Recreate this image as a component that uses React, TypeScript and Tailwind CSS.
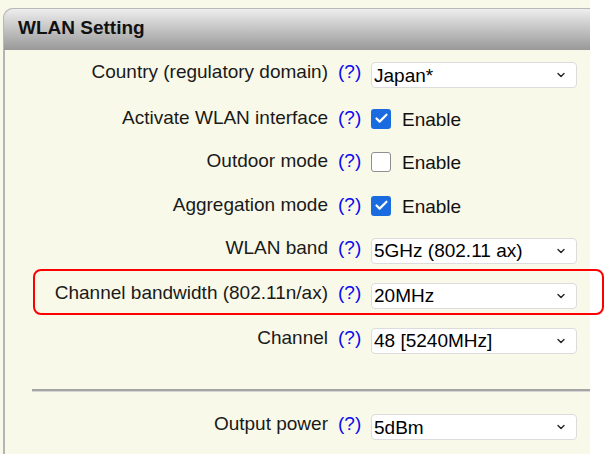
import { Check, ChevronDown } from 'lucide-react'

type Row =
  | { label: string; kind: 'select'; value: string; h: string }
  | { label: string; kind: 'check'; checked: boolean; h: string }

const rows: Row[] = [
  { label: 'Country (regulatory domain)', kind: 'select', value: 'Japan*', h: 'h-[44px]' },
  { label: 'Activate WLAN interface', kind: 'check', checked: true, h: 'h-[43px]' },
  { label: 'Outdoor mode', kind: 'check', checked: false, h: 'h-[43px]' },
  { label: 'Aggregation mode', kind: 'check', checked: true, h: 'h-[45px]' },
  { label: 'WLAN band', kind: 'select', value: '5GHz (802.11 ax)', h: 'h-[45px]' },
  { label: 'Channel bandwidth (802.11n/ax)', kind: 'select', value: '20MHz', h: 'h-[45px]' },
  { label: 'Channel', kind: 'select', value: '48 [5240MHz]', h: 'h-[45px]' },
]

function Select({ value }: { value: string }) {
  return (
    <div className="flex items-center justify-between w-[206px] h-[26px] bg-white border border-[#dcdcdc] rounded-[4px] pl-[2px] pr-[9px]">
      <span className="text-[19px] leading-none text-black">{value}</span>
      <ChevronDown className="w-[12px] h-[12px] text-[#222]" strokeWidth={2.75} />
    </div>
  )
}

function Checkbox({ checked }: { checked: boolean }) {
  if (checked) {
    return (
      <div className="w-[20px] h-[20px] rounded-[3px] bg-[#1a6be0] flex items-center justify-center">
        <Check className="w-[15px] h-[15px] text-white" strokeWidth={3.5} />
      </div>
    )
  }
  return <div className="w-[20px] h-[20px] rounded-[3px] bg-white border border-[#8f8f8f]" />
}

function SettingRow({ row }: { row: Row }) {
  const shift = row.kind === 'select' ? 'mb-[5px]' : ''
  return (
    <div className={`flex items-center ${row.h}`}>
      <div className={`w-[326px] text-right text-[19px] text-[#1a1a1a] ${shift}`}>{row.label}</div>
      <div className={`ml-[10px] w-[23px] text-[19px] text-[#0a0aee] ${shift}`}>(?)</div>
      <div className="ml-[10px] flex items-center">
        {row.kind === 'select' ? (
          <Select value={row.value} />
        ) : (
          <>
            <Checkbox checked={row.checked} />
            <span className="ml-[11px] text-[19px] text-[#111] mt-[3px]">Enable</span>
          </>
        )}
      </div>
    </div>
  )
}

export default function App() {
  return (
    <div className="relative w-[611px] h-[454px] bg-white overflow-hidden font-['Liberation_Sans',Arial,sans-serif]">
      <div className="w-[590px] h-full bg-[#f9f9e9] pt-[8px] pl-[3px]">
        <div className="h-full border-l-2 border-[#b4b4b4] rounded-tl-[10px]">
          <div className="h-[42px] -ml-[2px] rounded-tl-[10px] border-t border-l border-[#b8b8b8] bg-gradient-to-b from-[#eeeeee] to-[#999999] flex items-center pl-[14px]">
            <h2 className="text-[19px] font-bold text-[#111] mt-[-2px]">WLAN Setting</h2>
          </div>

          <div className="pt-[3px] -ml-[3px]">
            {rows.map((row) => (
              <SettingRow key={row.label} row={row} />
            ))}

            <div className="ml-[30px] mt-[26px] border-t-2 border-[#a4a4a4] border-b border-b-[#d6d6d6]" />

            <div className="mt-[13px]">
              <SettingRow row={{ label: 'Output power', kind: 'select', value: '5dBm', h: 'h-[44px]' }} />
            </div>
          </div>
        </div>
      </div>

      {/* red highlight around the bandwidth row */}
      <div className="absolute left-[33px] top-[269px] w-[571px] h-[46px] border-2 border-[#ff0000] rounded-[8px] pointer-events-none" />
    </div>
  )
}
